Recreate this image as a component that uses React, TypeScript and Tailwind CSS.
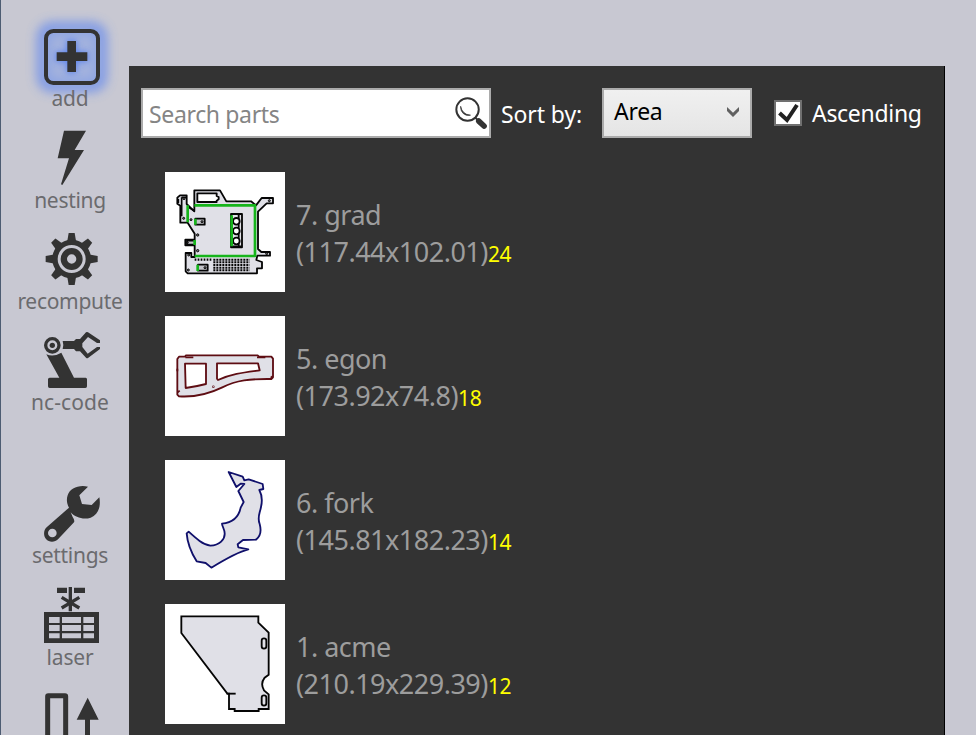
import type { ReactNode } from 'react';

type Item = { label: string; box: string; gap: string; spacing: string; icon: ReactNode };

const gearTeeth = [0, 45, 90, 135, 180, 225, 270, 315];

const items: Item[] = [
  {
    label: 'add',
    box: '0 48 387 180',
    gap: 'h-[102px]',
    spacing: 'tracking-[-0.2px]',
    icon: (
      <>
        <defs>
          <filter id="glow" x="-50%" y="-50%" width="200%" height="200%">
            <feGaussianBlur stdDeviation="17" />
          </filter>
          <filter id="softGlow" x="-80%" y="-80%" width="260%" height="260%">
            <feGaussianBlur stdDeviation="9" />
          </filter>
        </defs>
        <rect x="128" y="53" width="176" height="176" rx="28" fill="none" stroke="#4a78f5" strokeWidth="30" opacity="0.7" filter="url(#glow)" />
        <rect x="140" y="65" width="152" height="152" rx="22" fill="#8fa6e4" opacity="0.65" />
        <path d="M202 93h26v34h34v26h-34v33h-26v-33h-32v-26h32z" fill="#3d6ff5" stroke="#3d6ff5" strokeWidth="4" opacity="0.7" filter="url(#softGlow)" />
        <rect x="138" y="63" width="156" height="156" rx="22" fill="none" stroke="#333" strokeWidth="12" />
        <path d="M202 93h26v34h34v26h-34v33h-26v-33h-32v-26h32z" />
      </>
    ),
  },
  {
    label: 'nesting',
    box: '0 354 387 180',
    gap: 'h-[101px]',
    spacing: 'tracking-[-0.3px]',
    icon: <path d="M192 362H258L224 420H252L187 525L183 523L207 445H173Z" />,
  },
  {
    label: 'recompute',
    box: '0 27 387 180',
    gap: 'h-[101px]',
    spacing: 'tracking-[-0.3px]',
    icon: (
      <>
        {gearTeeth.map((a) => (
          <path key={a} d="M201 68L206 39H224L229 68Z" transform={`rotate(${a} 215 117)`} />
        ))}
        <circle cx="215" cy="117" r="50" fill="none" stroke="#333" strokeWidth="16" />
        <circle cx="215" cy="117" r="23.5" fill="none" stroke="#333" strokeWidth="19" />
      </>
    ),
  },
  {
    label: 'nc-code',
    box: '0 330 387 180',
    gap: 'h-[153px]',
    spacing: 'tracking-[0.1px]',
    icon: (
      <>
        <circle cx="157" cy="376" r="20" fill="none" stroke="#333" strokeWidth="10" />
        <circle cx="157" cy="376" r="8" />
        <path d="M139 403Q161 412 184 398L222 473H257Q261 473 261 478V499Q261 504 256 504H149Q144 504 144 499V478Q144 473 149 473H178Z" />
        <path d="M188 363H222L228 357H240L258 337Q261 335 264 337L300 361V369H291L264 351L247 370V381L263 401L291 381H300V387L264 414Q261 416 258 413L240 394H228L222 387H188Q192 375 188 363Z" />
      </>
    ),
  },
  {
    label: 'settings',
    box: '0 39 387 180',
    gap: 'h-[102px]',
    spacing: 'tracking-[-0.3px]',
    icon: (
      <path
        fillRule="evenodd"
        d="M264 50C235 44 210 55 203 76C199 88 200 101 207 113L140 172C130 181 130 197 138 207C147 218 165 217 174 208L222 157Q225 151 218 141L212 127C226 143 251 150 272 143C296 134 303 108 298 82L275 105L246 102L238 76ZM157 176A13 13 0 1 0 157 202A13 13 0 1 0 157 176Z"
      />
    ),
  },
  {
    label: 'laser',
    box: '0 345 387 180',
    gap: 'h-[101px]',
    spacing: 'tracking-[-0.2px]',
    icon: (
      <>
        <path d="M171 353H201V369H171ZM222 353H255V369H222ZM206 351H216V424H206Z" />
        <path d="M185 382L238 414M238 382L185 414" stroke="#333" strokeWidth="10" />
        <path
          fillRule="evenodd"
          d="M132 426H297V519H132ZM147 441V459H179V441ZM186 441V459H243V441ZM250 441V459H282V441ZM147 465V483H179V465ZM186 465V483H243V465ZM250 465V483H282V465ZM147 490V505H179V490ZM186 490V505H243V490ZM250 490V505H282V490Z"
        />
      </>
    ),
  },
  {
    label: '',
    box: '0 648 387 180',
    gap: 'h-[60px]',
    spacing: 'tracking-normal',
    icon: (
      <>
        <rect x="143" y="677" width="54" height="190" rx="2" fill="none" stroke="#333" strokeWidth="15" />
        <path d="M263 683L296 749H270V830H255V749H230Z" />
      </>
    ),
  },
];

const ventRows = [284, 292, 300, 308, 316];

const parts = [
  {
    name: '7. grad',
    size: '(117.44x102.01)',
    count: 24,
    box: '15 21 360 360',
    drawing: (
      <g stroke="#050505" strokeWidth="5.5" fill="#e0e0e7" strokeLinejoin="round">
        <path d="M103 76H180L199 109H273L288 121L305 99H339V115H320L294 140V252L304 261H330V272H292L289 285L306 291V310H291V325H83L77 319V264H94V276H104V241H76V224H104V206L83 173H61V122L52 116V98L60 91H80V117L103 139Z" />
        <path d="M112 85H170V93L176 96V103L170 107V111H112Z" fill="#fff" />
        <path d="M106 161H134V179H106ZM114 299H143V317H114Z" fill="#c4c4ca" />
        <path d="M104 227H81V239H104" fill="#c4c4ca" />
        <rect x="213" y="147" width="33" height="100" />
        <path d="M236 149V245M214 244H245" />
        <g fill="#fff">
          <circle cx="229" cy="169" r="10" />
          <circle cx="229" cy="198" r="10" />
          <circle cx="229" cy="228" r="10" />
        </g>
        <path d="M65 97V154M55 102V114M65 97H78M83 125L103 137" fill="none" strokeWidth="5" />
        <g fill="#777" strokeWidth="3">
          <circle cx="72" cy="101" r="3" />
          <circle cx="71" cy="160" r="3" />
          <circle cx="93" cy="164" r="3" />
          <circle cx="113" cy="210" r="3.5" />
          <circle cx="113" cy="257" r="3.5" />
          <circle cx="86" cy="270" r="3" />
          <circle cx="85" cy="315" r="3" />
          <circle cx="126" cy="170" r="3" />
          <circle cx="83" cy="233" r="2" />
          <circle cx="135" cy="308" r="3" />
          <circle cx="328" cy="107" r="3" />
          <circle cx="320" cy="266" r="3" />
        </g>
        <path d="M104 284H158" strokeWidth="7" strokeDasharray="5 4" />
        {ventRows.map((y) => (
          <path key={y} d={`M160 ${y}H269`} strokeWidth="6" strokeDasharray="6 3" />
        ))}
        <path d="M103 121H285V273H104M83 121V172M106 161V179M215 151V244M104 225V240M113 299V318" stroke="#16b51b" strokeWidth="8" fill="none" />
      </g>
    ),
  },
  {
    name: '5. egon',
    size: '(173.92x74.8)',
    count: 18,
    box: '15 18 360 360',
    drawing: (
      <g stroke="#5e0d13" strokeWidth="5.5" fill="#e0e0e7" strokeLinejoin="round">
        <path d="M57 140H75L78 136H293L297 140H334L339 146V202L334 207C270 206 229 211 187 232C144 253 101 262 57 259L52 254V147Z" />
        <path d="M75 161H138V222Q107 230 77 234Z" fill="#fff" />
        <path d="M171 160H294L299 181C255 187 215 191 174 210L171 206Z" fill="#fff" />
        <path d="M76 142H100M291 142H316M52 176V184M53 247L59 242M332 203L338 199" fill="none" />
        <circle cx="160" cy="230" r="1" />
      </g>
    ),
  },
  {
    name: '6. fork',
    size: '(145.81x182.23)',
    count: 14,
    box: '15 15 360 360',
    drawing: (
      <path
        d="M206 51L248 65L253 76L266 73L308 87L310 102L298 105C306 120 307 139 303 156C299 177 291 187 299 207C305 229 300 245 288 254L249 255L233 268L235 277L265 283C232 291 190 316 154 338L137 324L110 319C94 293 82 264 80 235L86 230C109 251 129 269 151 272C179 271 195 253 194 235C194 223 186 213 186 206C220 203 237 182 242 158L251 141L235 108L253 87L242 86L229 96Z"
        fill="#e0e0e7"
        stroke="#10106b"
        strokeWidth="5.5"
        strokeLinejoin="round"
      />
    ),
  },
  {
    name: '1. acme',
    size: '(210.19x229.39)',
    count: 12,
    box: '15 12 360 360',
    drawing: (
      <g stroke="#050505" strokeWidth="5.5" fill="#e0e0e7">
        <path d="M64 49H295V68L326 98V224L314 233Q300 251 312 271L326 283V327H296V333H224V327H207V281H202L64 99Z" />
        <path d="M200 281H227" />
        <rect x="305" y="115" width="14" height="31" rx="7" />
        <rect x="305" y="286" width="14" height="31" rx="7" />
      </g>
    ),
  },
];

export default function App() {
  return (
    <div className="flex h-[735px] w-[976px] overflow-hidden bg-[#c8c8d2] font-['Noto_Sans',sans-serif]">
      <nav className="w-[129px] shrink-0 border-l border-[#4d5c72] pt-[26px]">
        {items.map((item) => (
          <div key={item.box} className={`-ml-px flex flex-col items-center ${item.gap}`}>
            <svg className="block h-[60px] w-[129px] shrink-0 overflow-visible" viewBox={item.box} fill="#333">
              {item.icon}
            </svg>
            <span className={`ml-[11px] text-[21px] leading-[25px] text-[#6b6b6e] ${item.spacing}`}>{item.label}</span>
          </div>
        ))}
      </nav>

      <main className="mt-[66px] w-[816px] border-r border-black bg-[#333]">
        <header className="flex items-start pl-3 pt-[22px]">
          <div className="flex h-[50px] w-[350px] items-center justify-between border-2 border-[#ababab] bg-white pl-[6px] pr-[2px]">
            <span className="pt-[2px] text-[23px] leading-[30px] tracking-[-0.35px] text-[#858585]">Search parts</span>
            <svg className="h-8 w-8" viewBox="974 110 97 97" fill="none" stroke="#333">
              <circle cx="1012" cy="148" r="34" strokeWidth="6" />
              <path d="M1034 171L1042 179" strokeWidth="6" />
              <path d="M1046 183L1062 198" strokeWidth="17" strokeLinecap="round" />
              <path d="M991 138Q990 151 999 160Q1008 169 1021 165Q1007 164 1000 156Q993 149 991 138Z" fill="#333" strokeWidth="2" />
            </svg>
          </div>
          <span className="ml-[10px] mt-[11px] w-[101px] text-[23px] leading-[30px] tracking-[-0.1px] text-white">Sort by:</span>
          <div className="flex h-[50px] w-[150px] items-center justify-between border-2 border-[#ababab] bg-linear-to-b from-[#f0f0f0] to-[#e5e5e5] pl-[10px] pr-[11px]">
            <span className="pb-[4px] text-[23px] leading-[30px] tracking-[-0.3px] text-black">Area</span>
            <svg className="mb-[3px] h-[10px] w-3" viewBox="0 0 12 10" fill="#606060">
              <path d="M0 0L6 5.7L12 0V4L6 10L0 4Z" />
            </svg>
          </div>
          <div className="ml-[22px] mt-3 flex h-[26px] w-7 items-center justify-center border-2 border-[#707070] bg-white">
            <svg className="h-[22px] w-6" viewBox="0 0 24 22" fill="none" stroke="#212121" strokeWidth="4">
              <path d="M3.5 11L11 18L21 3" />
            </svg>
          </div>
          <span className="ml-[10px] mt-[10px] text-[23px] leading-[30px] tracking-[-0.3px] text-white">Ascending</span>
        </header>

        <ul className="flex flex-col gap-6 pl-9 pt-[34px]">
          {parts.map((part) => (
            <li key={part.name} className="flex h-[120px] shrink-0 items-center">
              <svg className="h-[120px] w-[120px] shrink-0 bg-white" viewBox={part.box}>
                {part.drawing}
              </svg>
              <div className="ml-[11px] pt-1 text-[27px] leading-[37px] text-[#9d9d9d]">
                <p className="tracking-[-0.5px]">{part.name}</p>
                <p className="whitespace-nowrap tracking-[-0.5px]">
                  {part.size}
                  <span className="text-[21px] tracking-[-0.4px] text-[#ffff00]">{part.count}</span>
                </p>
              </div>
            </li>
          ))}
        </ul>
      </main>
    </div>
  );
}
